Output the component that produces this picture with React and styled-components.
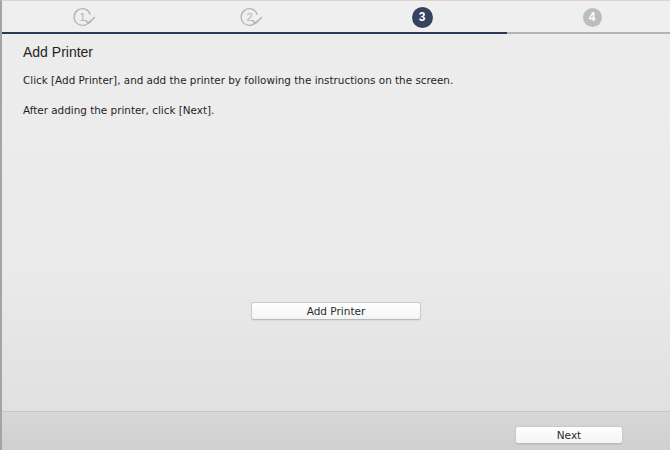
import styled, { createGlobalStyle } from "styled-components";

const navy = `#34425f`
const lineDark = `#2b3955`
const greyIcon = `#b4b4b4`
const textDark = `#1f1f1f`
const uiFont = `"DejaVu Sans", "Liberation Sans", Arial, sans-serif`

const GlobalStyle = createGlobalStyle`
  html, body {
    margin: 0;
    padding: 0;
    background: #ececec;
  }
  body {
    font-family: "Liberation Sans", Arial, sans-serif;
  }
`;

const Window = styled.div`
  width: 670px;
  height: 450px;
  box-sizing: border-box;
  display: flex;
  flex-direction: column;
  border-left: 2px solid #a4a4a4;
  border-top: 1px solid #e3cfd2;
  background: linear-gradient(to bottom, #ededed 0%, #eaeaea 60%, #dedede 100%);
  overflow: hidden;
`;

const StepBar = styled.div`
  height: 31px;
  display: grid;
  grid-template-columns: 165px 170px 170px 170px;
  align-items: center;
  justify-items: center;
  background: #efefef;
`;

const Progress = styled.div`
  height: 2px;
  background: linear-gradient(to right, ${lineDark} 0 505px, #b3b3b3 505px 100%);
`;

const Content = styled.div`
  flex: 1;
  display: flex;
  flex-direction: column;
  padding: 10px 21px 0;
`;

const Title = styled.h1`
  margin: 0;
  font-size: 14px;
  font-weight: normal;
  line-height: 17px;
  color: ${textDark};
`;

const Para = styled.p`
  margin: ${p => p.$top}px 0 0;
  font-family: ${uiFont};
  font-size: 10.4px;
  line-height: 13px;
  color: ${textDark};
`;

const Center = styled.div`
  margin-top: auto;
  margin-bottom: 91px;
  display: flex;
  justify-content: center;
`;

const Button = styled.button`
  width: ${p => p.$w}px;
  height: 18px;
  padding: 0;
  border: 1px solid #c9c9c9;
  border-bottom-color: #b8b8b8;
  border-radius: 3px;
  background: linear-gradient(to bottom, #ffffff, #f4f4f4);
  box-shadow: 0 1px 1px rgba(0, 0, 0, 0.06);
  font-family: ${uiFont};
  font-size: 10.5px;
  color: #2b2b2b;
  cursor: pointer;
`;

const Footer = styled.div`
  height: 39px;
  box-sizing: border-box;
  border-top: 1px solid #c6c6c6;
  background: linear-gradient(to bottom, #d7d7d7, #d0d0d0);
  display: flex;
  align-items: flex-start;
  justify-content: flex-end;
  padding: 14px 47px 0 0;
`;

const DoneStep = ({ n }) => (
  <svg width="26" height="22" viewBox="0 0 26 22">
    <path
      d="M 17.6 15.2 A 8.3 8.3 0 1 1 18.2 8.2"
      fill="none"
      stroke={greyIcon}
      strokeWidth="1.3"
      strokeLinecap="round"
    />
    <text
      x="10.5"
      y="15"
      textAnchor="middle"
      fontSize="11"
      fontFamily="Liberation Sans, Arial, sans-serif"
      fill={greyIcon}
    >
      {n}
    </text>
    <polyline
      points="13.5,14.5 16.5,17.5 22.5,11.5"
      fill="none"
      stroke={greyIcon}
      strokeWidth="1.6"
      strokeLinecap="round"
      strokeLinejoin="round"
    />
  </svg>
);

const StepDot = styled.div`
  width: ${p => p.$size}px;
  height: ${p => p.$size}px;
  border-radius: 50%;
  background: ${p => p.$bg};
  color: #ffffff;
  display: flex;
  align-items: center;
  justify-content: center;
  font-size: 12px;
  font-weight: bold;
  margin-top: 1px;
`;

export default function App() {
  return (
    <>
      <GlobalStyle />
      <Window>
        <StepBar>
          <DoneStep n="1" />
          <DoneStep n="2" />
          <StepDot $size={21} $bg={navy}>3</StepDot>
          <StepDot $size={19} $bg="#bdbdbd">4</StepDot>
        </StepBar>
        <Progress />
        <Content>
          <Title>Add Printer</Title>
          <Para $top={13}>
            Click [Add Printer], and add the printer by following the instructions on the screen.
          </Para>
          <Para $top={17}>After adding the printer, click [Next].</Para>
          <Center>
            <Button $w={170}>Add Printer</Button>
          </Center>
        </Content>
        <Footer>
          <Button $w={108}>Next</Button>
        </Footer>
      </Window>
    </>
  );
}
